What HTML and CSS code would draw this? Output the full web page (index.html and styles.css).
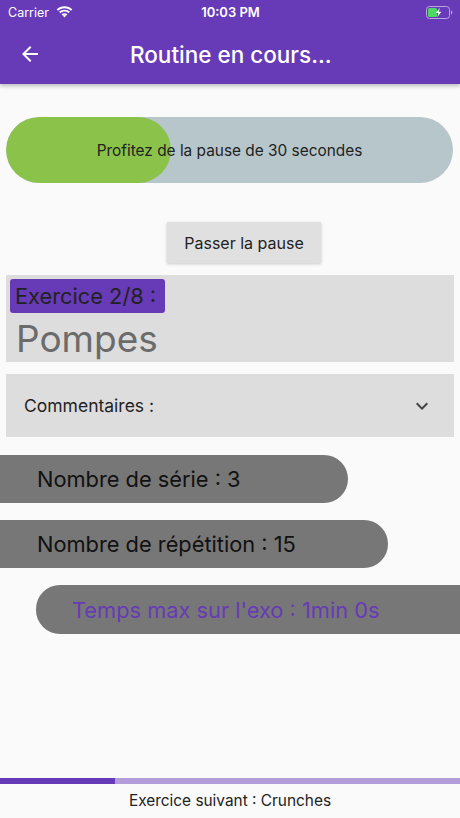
FILE: index.html
```html
<!DOCTYPE html>
<html lang="fr">
<head>
  <meta charset="UTF-8">
  <meta name="viewport" content="width=device-width, initial-scale=1.0">
  <title>Routine en cours...</title>
  <link rel="stylesheet" href="styles.css">
</head>
<body>
  <div class="screen">
    <!-- Status bar + app bar -->
    <header class="app-header">
      <div class="status-bar">
        <div class="status-left">
          <span>Carrier</span>
          <svg class="wifi" width="17" height="12" viewBox="0 0 17 12">
            <path d="M8.5 2.2c2.5 0 4.8 1 6.5 2.6l1.3-1.4C14.2 1.4 11.5.2 8.5.2S2.8 1.4.7 3.4L2 4.8c1.7-1.6 4-2.6 6.5-2.6z" fill="#fff"/>
            <path d="M8.5 5.6c1.6 0 3 .6 4.1 1.6l1.3-1.4C12.5 4.5 10.6 3.7 8.5 3.7S4.5 4.5 3.1 5.8l1.3 1.4c1.1-1 2.5-1.6 4.1-1.6z" fill="#fff"/>
            <path d="M8.5 8.9c.7 0 1.3.3 1.8.7l-1.8 2L6.7 9.6c.5-.4 1.1-.7 1.8-.7z" fill="#fff"/>
            <path d="M8.5 7.2c1.1 0 2.1.4 2.9 1.1l-1.1 1.2c-.5-.4-1.1-.7-1.8-.7s-1.3.3-1.8.7L5.6 8.3c.8-.7 1.8-1.1 2.9-1.1z" fill="#fff"/>
          </svg>
        </div>
        <div class="status-time">10:03 PM</div>
        <div class="status-right">
          <svg width="27" height="13" viewBox="0 0 27 13">
            <rect x="0.5" y="0.5" width="23" height="12" rx="3" fill="none" stroke="#b9a6e0" stroke-width="1"/>
            <rect x="2" y="2" width="9" height="9" rx="1.5" fill="#4cd964"/>
            <path d="M25 4.5v4c.8-.3 1.3-1.1 1.3-2s-.5-1.7-1.3-2z" fill="#b9a6e0"/>
            <path d="M13.8 1.8l-4 5.2h2.6l-1.2 4.2 4.2-5.4h-2.6z" fill="#fff"/>
          </svg>
        </div>
      </div>
      <div class="toolbar">
        <svg class="back" width="24" height="24" viewBox="0 0 24 24">
          <path d="M20 11H7.83l5.59-5.59L12 4l-8 8 8 8 1.41-1.41L7.83 13H20v-2z" fill="#fff"/>
        </svg>
        <h1 class="title">Routine en cours...</h1>
      </div>
    </header>

    <main class="content">
      <div class="pause-bar">
        <div class="pause-fill"></div>
        <span class="pause-text">Profitez de la pause de 30 secondes</span>
      </div>

      <button class="skip-btn">Passer la pause</button>

      <section class="exercise-card">
        <span class="exercise-badge">Exercice 2/8 :</span>
        <div class="exercise-name">Pompes</div>
      </section>

      <section class="comments">
        <span>Commentaires :</span>
        <svg width="24" height="24" viewBox="0 0 24 24">
          <path d="M7.41 8.59L12 13.17l4.59-4.58L18 10l-6 6-6-6 1.41-1.41z" fill="#444"/>
        </svg>
      </section>

      <div class="info-pill pill-series">Nombre de série : 3</div>
      <div class="info-pill pill-reps">Nombre de répétition : 15</div>
      <div class="info-pill pill-time">Temps max sur l'exo : 1min 0s</div>
    </main>

    <footer class="app-footer">
      <div class="routine-progress">
        <div class="routine-progress-fill" style="width: 25%"></div>
      </div>
      <div class="next-exercise">Exercice suivant : Crunches</div>
    </footer>
  </div>
</body>
</html>
```

FILE: styles.css
```css
html, body {
  margin: 0;
  padding: 0;
}
body {
  font-family: Inter, "Noto Sans", sans-serif;
  background-color: #fafafa;
  color: #222;
}
.screen {
  width: 460px;
  height: 818px;
  display: flex;
  flex-direction: column;
  overflow: hidden;
}

/* Header */
.app-header {
  background-color: #673ab7;
  color: #fff;
  box-shadow: 0 2px 4px rgba(0, 0, 0, 0.25);
  position: relative;
  z-index: 1;
}
.status-bar {
  height: 24px;
  display: flex;
  align-items: center;
  justify-content: space-between;
  padding: 0 7px 0 8px;
  font-size: 12.5px;
}
.status-left {
  display: flex;
  align-items: center;
  gap: 7px;
  width: 90px;
}
.status-time {
  font-weight: 600;
  font-size: 13px;
}
.status-right {
  width: 90px;
  display: flex;
  justify-content: flex-end;
}
.toolbar {
  height: 60px;
  display: flex;
  align-items: center;
  padding: 0 18px;
}
.back {
  flex-shrink: 0;
}
.title {
  margin: 0 0 0 88px;
  font-size: 22.5px;
  font-weight: 500;
}

/* Content */
.content {
  flex: 1;
  display: flex;
  flex-direction: column;
}
.pause-bar {
  position: relative;
  margin: 33px 7px 0 6px;
  height: 66px;
  border-radius: 33px;
  background-color: #b7c6cb;
  display: flex;
  align-items: center;
  justify-content: center;
  overflow: hidden;
}
.pause-fill {
  position: absolute;
  left: 0;
  top: 0;
  bottom: 0;
  width: 165px;
  border-radius: 33px;
  background-color: #8bc34a;
}
.pause-text {
  position: relative;
  font-size: 15.4px;
  color: #222;
}
.skip-btn {
  align-self: flex-start;
  margin: 39px 0 0 167px;
  width: 154px;
  height: 41px;
  border: none;
  background-color: #e0e0e0;
  box-shadow: 0 1px 3px rgba(0, 0, 0, 0.2);
  font-family: inherit;
  font-size: 16px;
  color: #222;
}
.exercise-card {
  margin: 12px 6px 0 6px;
  height: 87px;
  background-color: #dddddd;
  padding: 4px 0 0 4px;
  box-sizing: border-box;
  display: flex;
  flex-direction: column;
  align-items: flex-start;
}
.exercise-badge {
  background-color: #673ab7;
  border-radius: 3px;
  padding: 3px 9px 3px 5px;
  font-size: 21.8px;
  line-height: 28px;
  color: #222;
}
.exercise-name {
  margin: 2px 0 0 6px;
  font-size: 37px;
  line-height: 48px;
  color: #6b6b6b;
}
.comments {
  margin: 12px 6px 0 6px;
  height: 63px;
  background-color: #dddddd;
  display: flex;
  align-items: center;
  justify-content: space-between;
  padding: 0 20px 0 18px;
  font-size: 17.5px;
}
.info-pill {
  height: 48px;
  background-color: #777777;
  display: flex;
  align-items: center;
  font-size: 21.8px;
  color: #111;
  box-sizing: border-box;
}
.pill-series {
  margin-top: 18px;
  width: 348px;
  padding-left: 37px;
  border-radius: 0 24px 24px 0;
}
.pill-reps {
  margin-top: 17px;
  width: 388px;
  padding-left: 37px;
  border-radius: 0 24px 24px 0;
}
.pill-time {
  margin: 17px 0 0 36px;
  height: 49px;
  padding-left: 36px;
  border-radius: 24px 0 0 24px;
  color: #673ab7;
}

/* Footer */
.app-footer {
  height: 40px;
}
.routine-progress {
  height: 6px;
  background-color: #b39ddb;
}
.routine-progress-fill {
  height: 100%;
  background-color: #673ab7;
}
.next-exercise {
  text-align: center;
  font-size: 15.4px;
  line-height: 34px;
  color: #222;
}
```
